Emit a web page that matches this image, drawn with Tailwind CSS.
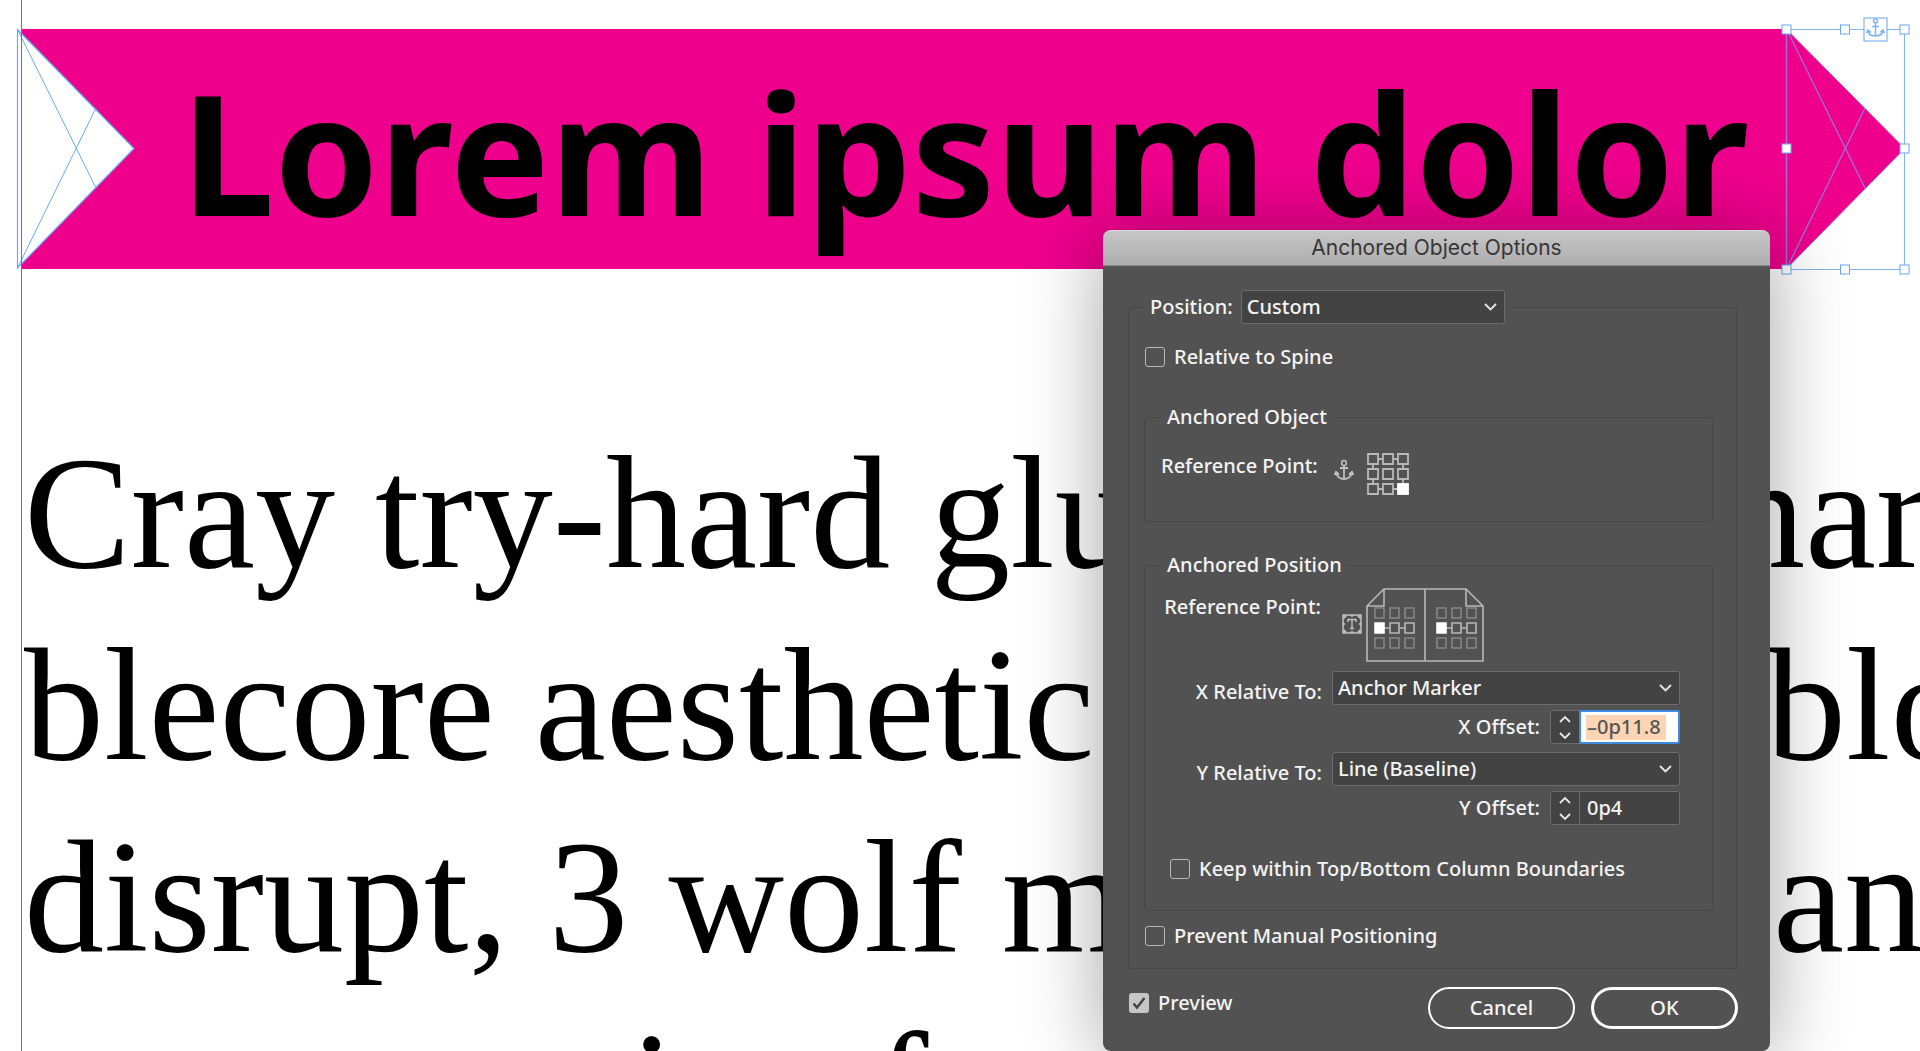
<!DOCTYPE html>
<html lang="en">
<head>
  <meta charset="UTF-8">
  <meta name="viewport" content="width=device-width, initial-scale=1.0">
  <title>Anchored Object Options</title>
  <script src="https://cdn.jsdelivr.net/npm/@tailwindcss/browser@4"></script>
</head>
<body class="bg-white">
  <div class="relative h-screen overflow-hidden">

    <!-- Document page -->
    <main class="ml-[21px] h-full border-l border-[#a84fc0] pt-[29px] text-black">
      <div class="relative mr-[133px] h-[240px] bg-[#ee008c]">
        <h1 class="pl-[159px] pt-[10px] font-['Noto_Sans',sans-serif] text-[167px] leading-[224px] font-bold whitespace-nowrap">Lorem ipsum dolor</h1>

        <!-- Notch frame -->
        <svg class="absolute -left-[6px] -top-px" width="120" height="242" viewBox="0 0 120 242" fill="none" stroke="#6aa9f5">
          <path d="M1.5 1.5L118 120.5L1.5 240z" fill="#fff" stroke-width="1.2"/>
          <path d="M1.5 1.5L80 160M1.5 240L80 80"/>
          <path d="M5.5 0V242" stroke="#a84fc0"/>
        </svg>

        <!-- Arrow frame, selected -->
        <svg class="absolute left-full -top-[13px] -ml-[7px]" width="132" height="264" viewBox="0 0 132 264" fill="none" stroke="#7fb4f2">
          <path d="M6.5 13L125 132.5L6.5 253z" fill="#ee008c"/>
          <path d="M6.5 13L85 172M6.5 253L85 92" stroke="#a070d8" stroke-width="1.3"/>
          <path d="M6.5 13.5H124.5V253.5H6.5z"/>
          <path d="M6.5 13.5V253.5" stroke="#a070d8" stroke-width="1.5"/>
          <g fill="#fff" stroke="#6aa6ee">
            <rect x="2" y="9" width="9" height="9"/>
            <rect x="60.5" y="9" width="9" height="9"/>
            <rect x="120" y="9" width="9" height="9"/>
            <rect x="2" y="128" width="9" height="9"/>
            <rect x="120" y="128" width="9" height="9"/>
            <rect x="2" y="249" width="9" height="9"/>
            <rect x="60.5" y="249" width="9" height="9"/>
            <rect x="120" y="249" width="9" height="9"/>
            <rect x="84" y="2" width="23" height="23"/>
          </g>
          <g stroke-width="1.5">
            <circle cx="95.5" cy="5" r="2"/>
            <path d="M95.5 7V20M92 10.5H99M88 15Q89 20 95.5 20Q102 20 103 15M86.5 17L88 14L91 16.5M104.5 17L103 14L100 16.5"/>
          </g>
        </svg>
      </div>

      <div class="mt-[148px] pl-[2px] font-['Liberation_Serif',serif] text-[160px] leading-[192px] whitespace-nowrap">
        <div class="flex"><span class="w-[1701px] shrink-0">Cray try-hard glu</span><span>har</span></div>
        <div class="flex"><span class="w-[1742px] shrink-0">blecore aesthetic</span><span>blo</span></div>
        <div class="flex"><span class="w-[1749px] shrink-0">disrupt, 3 wolf m</span><span>an</span></div>
        <div class="pl-[562px]">tion f</div>
      </div>
    </main>

    <!-- Dialog -->
    <form class="absolute right-[150px] top-[230px] w-[667px] rounded-[8px] bg-[#525252] pb-[22px] font-['Noto_Sans',sans-serif] text-[20px] leading-[26px] font-medium text-[#f4f4f4] shadow-[0_8px_80px_rgba(0,0,0,0.36)]" onsubmit="return false">
      <h2 class="h-[36px] rounded-t-[8px] border-t border-b border-t-[#d8d8d8] border-b-[#8c8c8c] bg-linear-to-b from-[#c6c6c6] to-[#aeaeae] text-center font-['Inter',sans-serif] text-[21px] leading-[34px] font-normal text-[#363636]">Anchored Object Options</h2>

      <fieldset class="mr-[33px] ml-[25px] mt-[24px] rounded-[3px] border border-[#474747] pr-[23px] pb-[19px] pl-[15px]">
        <legend class="flex h-[34px] items-center gap-[8px] pr-[6px] pl-[6px]">
          <label for="position">Position:</label>
          <span class="relative">
            <select id="position" class="h-[34px] w-[264px] appearance-none rounded-[3px] border border-[#6c6c6c] bg-[#434343] px-[5px] leading-[26px]"><option>Custom</option></select>
            <svg class="pointer-events-none absolute right-[8px] top-[13px]" width="13" height="8" viewBox="0 0 13 8" fill="none" stroke="#e6e6e6" stroke-width="1.8"><path d="M1 1L6.5 6.5L12 1"/></svg>
          </span>
        </legend>

        <label class="mt-[20px] ml-px flex w-fit items-center gap-[9px]">
          <input type="checkbox" class="size-5 appearance-none rounded-[3px] border-[1.5px] border-[#b8b8b8]">
          Relative to Spine
        </label>

        <fieldset class="mt-[34px] h-[118px] rounded-[3px] border border-[#474747] px-[16px]">
          <legend class="px-[6px]">Anchored Object</legend>
          <div class="mt-[23px] flex items-start gap-[14px]">
            <span class="w-[159px]">Reference Point:</span>
            <div class="flex items-start gap-[13px]">
              <svg class="mt-[6px]" width="20" height="22" viewBox="0 0 20 22" fill="none" stroke="#c0c0c0" stroke-width="2">
                <circle cx="10" cy="4" r="2.4" stroke-width="1.5"/>
                <path d="M10 6.5V20M6 9H14M2 14Q4 20 10 20Q16 20 18 14M0.5 16L2 13L5 15.5M19.5 16L18 13L15 15.5" stroke-width="1.8"/>
              </svg>
              <svg width="42" height="42" viewBox="0 0 42 42" fill="none" stroke="#b8b8b8" stroke-width="1.8">
                <path d="M1 1h10v10H1zM16 1h10v10H16zM31 1h10v10H31zM1 16h10v10H1zM16 16h10v10H16zM31 16h10v10H31zM1 31h10v10H1zM16 31h10v10H16z"/>
                <path d="M11 6h5M26 6h5M11 36h5M26 36h5M6 11v5M6 26v5M36 11v5M36 26v5"/>
                <rect x="31" y="31" width="10" height="10" fill="#fff" stroke="#fff"/>
              </svg>
            </div>
          </div>
        </fieldset>

        <fieldset class="mt-[30px] rounded-[3px] border border-[#474747] pr-[17px] pb-[28px] pl-[16px]">
          <legend class="px-[6px]">Anchored Position</legend>
          <div class="mt-[10px] flex items-start">
            <span class="mt-[6px] w-[160px] text-right">Reference Point:</span>
            <svg class="mt-[26px] ml-[21px]" width="20" height="20" viewBox="0 0 20 20" fill="none" stroke="#bdbdbd" stroke-width="1.5">
              <path d="M1 1h18v18H1z"/>
              <path d="M6 8V5.5H14V8M10 5.5V14.5M8 14.5H12"/>
              <path fill="#bdbdbd" stroke="none" d="M1 1H6L1 6zM19 1V6L14 1zM1 19V14L6 19zM19 19H14L19 14zM8 1H12L10 3.5zM8 19H12L10 16.5zM1 8V12L3.5 10zM19 8V12L16.5 10z"/>
            </svg>
            <svg class="ml-[4px]" width="118" height="74" viewBox="0 0 118 74" fill="none" stroke="#b8b8b8" stroke-width="1.6">
              <path d="M1 18L18 1H100L117 18V73H1zM59 1V73M18 1V18H1M100 1V18H117"/>
              <path stroke="#858585" d="M9 20h9v10H9zM24 20h9v10h-9zM39 20h9v10h-9zM71 20h9v10h-9zM86 20h9v10h-9zM101 20h9v10h-9zM9 50h9v10H9zM24 50h9v10h-9zM39 50h9v10h-9zM71 50h9v10h-9zM86 50h9v10h-9zM101 50h9v10h-9z"/>
              <path d="M24 35h9v10h-9zM39 35h9v10h-9zM86 35h9v10h-9zM101 35h9v10h-9zM18 40h6M33 40h6M80 40h6M95 40h6"/>
              <path fill="#fff" stroke="#fff" d="M9 35h9v10H9zM71 35h9v10h-9z"/>
            </svg>
          </div>

          <div class="mt-[9px] flex items-center justify-end gap-[10px] pr-[15px]">
            <label for="x-relative" class="pt-[8px]">X Relative To:</label>
            <span class="relative">
              <select id="x-relative" class="h-[34px] w-[348px] appearance-none rounded-[3px] border border-[#6c6c6c] bg-[#434343] px-[5px] leading-[26px]"><option>Anchor Marker</option></select>
              <svg class="pointer-events-none absolute right-[8px] top-[13px]" width="13" height="8" viewBox="0 0 13 8" fill="none" stroke="#e6e6e6" stroke-width="1.8"><path d="M1 1L6.5 6.5L12 1"/></svg>
            </span>
          </div>
          <div class="mt-[5px] flex items-center justify-end gap-[10px] pr-[15px]">
            <label for="x-offset">X Offset:</label>
            <div class="flex h-[34px] w-[130px] rounded-[3px] border border-[#6c6c6c] bg-[#434343]">
              <div class="flex w-[28px] flex-col">
                <button type="button" aria-label="Increase X Offset" class="flex flex-1 items-center justify-center"><svg width="12" height="7" viewBox="0 0 12 7" fill="none" stroke="#e6e6e6" stroke-width="1.8"><path d="M1 6L6 1L11 6"/></svg></button>
                <button type="button" aria-label="Decrease X Offset" class="flex flex-1 items-center justify-center"><svg width="12" height="7" viewBox="0 0 12 7" fill="none" stroke="#e6e6e6" stroke-width="1.8"><path d="M1 1L6 6L11 1"/></svg></button>
              </div>
              <div class="-my-px -mr-px flex flex-1 items-center rounded-r-[3px] border-2 border-[#3f8ae0] bg-white pl-[5px]">
                <input id="x-offset" type="text" value="–0p11.8" class="h-[25px] w-[80px] bg-[#fcd5b5] pl-px text-[#555] outline-none">
              </div>
            </div>
          </div>

          <div class="mt-[8px] flex items-center justify-end gap-[10px] pr-[15px]">
            <label for="y-relative" class="pt-[8px]">Y Relative To:</label>
            <span class="relative">
              <select id="y-relative" class="h-[34px] w-[348px] appearance-none rounded-[3px] border border-[#6c6c6c] bg-[#434343] px-[5px] leading-[26px]"><option>Line (Baseline)</option></select>
              <svg class="pointer-events-none absolute right-[8px] top-[13px]" width="13" height="8" viewBox="0 0 13 8" fill="none" stroke="#e6e6e6" stroke-width="1.8"><path d="M1 1L6.5 6.5L12 1"/></svg>
            </span>
          </div>
          <div class="mt-[5px] flex items-center justify-end gap-[10px] pr-[15px]">
            <label for="y-offset">Y Offset:</label>
            <div class="flex h-[34px] w-[130px] rounded-[3px] border border-[#6c6c6c] bg-[#434343]">
              <div class="flex w-[28px] flex-col">
                <button type="button" aria-label="Increase Y Offset" class="flex flex-1 items-center justify-center"><svg width="12" height="7" viewBox="0 0 12 7" fill="none" stroke="#e6e6e6" stroke-width="1.8"><path d="M1 6L6 1L11 6"/></svg></button>
                <button type="button" aria-label="Decrease Y Offset" class="flex flex-1 items-center justify-center"><svg width="12" height="7" viewBox="0 0 12 7" fill="none" stroke="#e6e6e6" stroke-width="1.8"><path d="M1 1L6 6L11 1"/></svg></button>
              </div>
              <input id="y-offset" type="text" value="0p4" class="w-full min-w-0 flex-1 border-l border-[#6c6c6c] pl-[7px] outline-none">
            </div>
          </div>

          <label class="mt-[31px] ml-[9px] flex w-fit items-center gap-[9px] whitespace-nowrap">
            <input type="checkbox" class="size-5 appearance-none rounded-[3px] border-[1.5px] border-[#b8b8b8]">
            Keep within Top/Bottom Column Boundaries
          </label>
        </fieldset>

        <label class="mt-[12px] ml-px flex w-fit items-center gap-[9px]">
          <input type="checkbox" class="size-5 appearance-none rounded-[3px] border-[1.5px] border-[#b8b8b8]">
          Prevent Manual Positioning
        </label>
      </fieldset>

      <div class="mt-[18px] flex gap-[16px] pr-[32px] pl-[26px]">
        <label class="relative mt-[3px] mr-auto flex h-fit items-center gap-[9px]">
          <input type="checkbox" checked class="size-5 appearance-none rounded-[3px] bg-[#c6c6c6]">
          <svg class="pointer-events-none absolute left-[3px]" width="14" height="14" viewBox="0 0 14 14" fill="none" stroke="#444" stroke-width="2.5"><path d="M1.5 7.5L5 11.5L12.5 2"/></svg>
          Preview
        </label>
        <button type="button" class="h-[42px] w-[147px] rounded-full border-2 border-white">Cancel</button>
        <button type="submit" class="h-[42px] w-[147px] rounded-full border-[3px] border-white">OK</button>
      </div>
    </form>
  </div>
</body>
</html>
